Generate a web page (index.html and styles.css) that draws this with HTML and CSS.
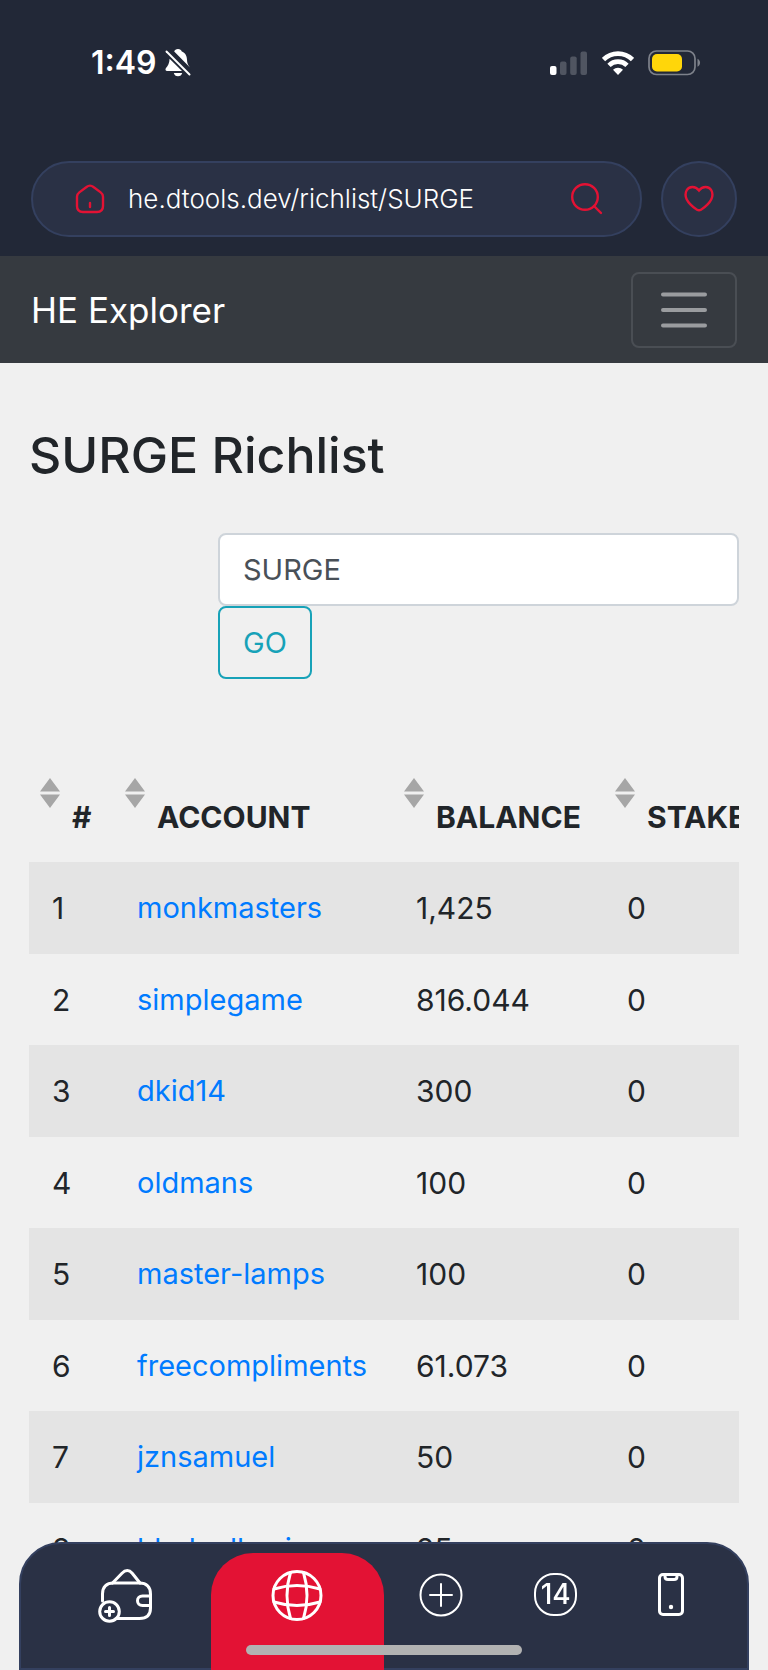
FILE: index.html
```html
<!DOCTYPE html>
<html lang="en">
<head>
    <meta charset="UTF-8">
    <meta name="viewport" content="width=device-width, initial-scale=1">
    <title>SURGE Richlist</title>
    <link rel="stylesheet" href="styles.css">
</head>
<body>
    <header class="topbar">
        <div class="status">
            <span class="time">1:49</span>
            <svg class="bell" width="26" height="28" viewBox="0 0 26 28">
                <path fill="#fff" d="M13 0c-2 0-3.400 1-3.800 2.400L25 18.600c-2-2.400-3-4.600-3-7.600 0-4.600-2-7.400-5.200-8.600C16.300 1 15 0 13 0zM4.600 9.800 17 22H2.200C.4 22 0 20.400 1 19c2-2.400 3.400-4.600 3.600-9.200zM8.800 24h8.400c-.4 2-2 3.300-4.200 3.300S9.200 26 8.800 24z"/>
                <path stroke="#222837" stroke-width="4" d="M3 1l23 23"/>
                <path stroke="#fff" stroke-width="2" stroke-linecap="round" d="M1.500 2.500l23 23"/>
            </svg>
            <div class="signals">
                <svg width="38" height="24" viewBox="0 0 38 24">
                    <rect x="0" y="15" width="6.500" height="9" rx="2" fill="#fff"/>
                    <g fill="#505561">
                        <rect x="10" y="10.500" width="6.500" height="13.500" rx="2"/>
                        <rect x="20.200" y="5.500" width="6.500" height="18.500" rx="2"/>
                        <rect x="30.500" y="0.500" width="6.500" height="23.500" rx="2"/>
                    </g>
                </svg>
                <svg width="32" height="24" viewBox="0 0 32 24">
                    <g fill="none" stroke="#fff" stroke-width="4.600">
                        <path d="M1.500 8.600a20.500 20.500 0 0 1 29 0"/>
                        <path d="M7 14.400a12.700 12.700 0 0 1 18 0"/>
                    </g>
                    <path fill="#fff" d="M16 24l-5-5.200a7.200 7.200 0 0 1 10 0z"/>
                </svg>
                <svg width="54" height="26" viewBox="0 0 54 26">
                    <rect x="1" y="1" width="46" height="23.500" rx="7.500" fill="none" stroke="#7e828b" stroke-width="1.700"/>
                    <rect x="4" y="4" width="30" height="17.500" rx="5" fill="#ffd60a"/>
                    <path fill="#7e828b" d="M49.500 8.800c3.400 1.600 3.400 6.400 0 8z"/>
                </svg>
            </div>
        </div>
        <div class="address-row">
            <div class="address">
                <button class="icon-btn" type="button" aria-label="Home">
                    <svg width="30" height="30" viewBox="0 0 30 30" stroke-width="2.400">
                        <path d="M11.500 3 4.300 8.400C2.600 9.700 2 10.600 2 12.700V22c0 4 2 6 6 6h14c4 0 6-2 6-6v-9.300c0-2.100-.6-3-2.300-4.300L18.500 3c-2.400-1.900-4.600-1.900-7 0z"/>
                        <path d="M15 19v4"/>
                    </svg>
                </button>
                <input class="url" type="text" aria-label="Address" value="he.dtools.dev/richlist/SURGE">
                <button class="icon-btn" type="button" aria-label="Search">
                    <svg width="32" height="32" viewBox="0 0 32 32" stroke-width="2.400">
                        <circle cx="14" cy="14" r="12.800"/>
                        <path d="M23 23l7 7"/>
                    </svg>
                </button>
            </div>
            <button class="favorite" type="button" aria-label="Favorite">
                <svg width="30" height="28" viewBox="0 0 30 28" stroke-width="2.400">
                    <path d="M15 5.500C11.500.8 5 1 2.700 5.300.2 10 2.600 15.400 6.400 19.400c2.400 2.500 4.600 4.200 6.600 5.300 1.400.8 2.600.8 4 0 2-1.100 4.200-2.800 6.600-5.300 3.800-4 6.200-9.400 3.700-14.100C25 1 18.500.8 15 5.500z"/>
                </svg>
            </button>
        </div>
    </header>

    <nav class="navbar">
        <a class="brand" href="#">HE Explorer</a>
        <button class="toggler" type="button" aria-label="Toggle navigation">
            <svg width="46" height="36" viewBox="0 0 46 36">
                <path d="M2 2.500h42M2 18h42M2 33.500h42"/>
            </svg>
        </button>
    </nav>

    <main class="content">
        <h1>SURGE Richlist</h1>
        <form class="token-form">
            <input class="token" type="text" aria-label="Token symbol" value="SURGE">
            <button class="go" type="button">GO</button>
        </form>

        <div class="table-wrap">
            <table>
                <colgroup>
                    <col class="col-rank">
                    <col class="col-account">
                    <col class="col-balance">
                    <col class="col-stake">
                </colgroup>
                <thead>
                    <tr>
                        <th><button class="sort" type="button"><svg width="20" height="30" viewBox="0 0 20 30"><path d="M10 0l10 13.500H0zM0 16.500h20L10 30z"/></svg><span>#</span></button></th>
                        <th><button class="sort" type="button"><svg width="20" height="30" viewBox="0 0 20 30"><path d="M10 0l10 13.500H0zM0 16.500h20L10 30z"/></svg><span>ACCOUNT</span></button></th>
                        <th><button class="sort" type="button"><svg width="20" height="30" viewBox="0 0 20 30"><path d="M10 0l10 13.500H0zM0 16.500h20L10 30z"/></svg><span>BALANCE</span></button></th>
                        <th><button class="sort" type="button"><svg width="20" height="30" viewBox="0 0 20 30"><path d="M10 0l10 13.500H0zM0 16.500h20L10 30z"/></svg><span>STAKE</span></button></th>
                    </tr>
                </thead>
                <tbody>
                    <tr><td>1</td><td><a href="#">monkmasters</a></td><td>1,425</td><td>0</td></tr>
                    <tr><td>2</td><td><a href="#">simplegame</a></td><td>816.044</td><td>0</td></tr>
                    <tr><td>3</td><td><a href="#">dkid14</a></td><td>300</td><td>0</td></tr>
                    <tr><td>4</td><td><a href="#">oldmans</a></td><td>100</td><td>0</td></tr>
                    <tr><td>5</td><td><a href="#">master-lamps</a></td><td>100</td><td>0</td></tr>
                    <tr><td>6</td><td><a href="#">freecompliments</a></td><td>61.073</td><td>0</td></tr>
                    <tr><td>7</td><td><a href="#">jznsamuel</a></td><td>50</td><td>0</td></tr>
                    <tr><td>8</td><td><a href="#">hhokmllsmi</a></td><td>25</td><td>0</td></tr>
                </tbody>
            </table>
        </div>
    </main>

    <nav class="tabs">
        <a class="tab" href="#" aria-label="Wallet">
            <svg width="54" height="54" viewBox="0 0 54 54">
                <path d="M4.500 32V25c0-7 4-11 11-11h26c7 0 11 4 11 11v14c0 7-4 10.500-11 10.500H18"/>
                <path d="M14.500 14 24 4.200c3.400-3.600 7.200-3.600 10.200 0L42 14"/>
                <path d="M52 27h-7.500c-3 0-5 2-5 4.700s2 4.800 5 4.800H52"/>
                <circle cx="11.500" cy="42.500" r="9.800"/>
                <path d="M11.500 38.500v8M7.500 42.500h8"/>
            </svg>
        </a>
        <a class="tab active" href="#" aria-label="Browser">
            <svg width="54" height="54" viewBox="0 0 54 54">
                <circle cx="27" cy="26.500" r="24"/>
                <path d="M20.500 3.500c-4.600 15-4.600 31 0 46M33.500 3.500c4.600 15 4.600 31 0 46"/>
                <path d="M4 20c15-4.600 31-4.600 46 0M4 33c15 4.600 31 4.600 46 0"/>
            </svg>
        </a>
        <a class="tab thin" href="#" aria-label="New tab">
            <svg width="54" height="54" viewBox="0 0 54 54">
                <circle cx="27" cy="26" r="20.500"/>
                <path d="M27 15v22M16 26h22"/>
            </svg>
        </a>
        <a class="tab" href="#"><span class="count">14</span></a>
        <a class="tab" href="#" aria-label="Device">
            <svg width="54" height="54" viewBox="0 0 54 54">
                <rect x="15.500" y="5.500" width="23" height="40" rx="3.500"/>
                <path d="M21 6v1.500c0 2 1 3 3 3h6c2 0 3-1 3-3V6"/>
                <circle class="dot" cx="27" cy="38" r="2.200"/>
            </svg>
        </a>
        <div class="home-indicator"></div>
    </nav>
</body>
</html>
```

FILE: styles.css
```css
* {
    box-sizing: border-box;
}
body {
    margin: 0;
    min-height: 100vh;
    font-family: Inter, "Liberation Sans", sans-serif;
    font-size: 30px;
    line-height: 44px;
    color: #212529;
    background-color: #f0f0f0;
}
svg {
    display: block;
    flex-shrink: 0;
}
button, input {
    font: inherit;
    margin: 0;
}
button {
    cursor: pointer;
}
a {
    color: #007bff;
    text-decoration: none;
}

/* browser header */
.topbar {
    background-color: #222837;
    padding: 49px 31px 19px;
}
.status {
    display: flex;
    align-items: center;
    height: 28px;
    padding: 0 35px 0 60px;
    color: #fff;
}
.time {
    font-size: 32px;
    font-weight: 600;
    margin-right: 8px;
}
.signals {
    display: flex;
    align-items: center;
    gap: 14px;
    margin-left: auto;
}
.address-row {
    display: flex;
    gap: 19px;
    margin-top: 84px;
}
.address {
    flex: 1;
    min-width: 0;
    display: flex;
    align-items: center;
    height: 76px;
    padding: 0 37px 0 42px;
    border: 2px solid #34405f;
    border-radius: 38px;
    background-color: #2a3145;
}
.icon-btn {
    padding: 0;
    border: none;
    background: none;
}
.icon-btn svg, .favorite svg {
    fill: none;
    stroke: #e31234;
    stroke-linecap: round;
}
.url {
    flex: 1;
    min-width: 0;
    padding: 0 23px;
    border: none;
    outline: none;
    background: none;
    color: #fff;
    font-size: 26px;
    font-weight: 300;
}
.favorite {
    display: flex;
    align-items: center;
    justify-content: center;
    width: 76px;
    height: 76px;
    padding: 0;
    border: 2px solid #34405f;
    border-radius: 50%;
    background-color: #2a3145;
}

/* site navbar */
.navbar {
    display: flex;
    align-items: center;
    justify-content: space-between;
    padding: 16px 31px 15px;
    background-color: #363a40;
}
.brand {
    color: #fff;
    font-size: 35px;
}
.toggler {
    padding: 18px 28px;
    border: 2px solid #4a4e54;
    border-radius: 8px;
    background: none;
}
.toggler svg {
    stroke: #9a9c9f;
    stroke-width: 4;
    stroke-linecap: round;
}

/* page */
.content {
    padding: 62px 29px 32px;
}
h1 {
    margin: 0 0 48px;
    font-size: 50px;
    font-weight: 500;
    line-height: 60px;
}
.token-form {
    display: flex;
    flex-direction: column;
    align-items: flex-start;
    margin: 0 0 92px 189px;
}
.token, .go {
    height: 73px;
    padding: 0 23px;
    border-radius: 8px;
    font-size: 29px;
}
.token {
    width: 100%;
    border: 2px solid #ced4da;
    background-color: #fff;
    color: #495057;
}
.go {
    border: 2px solid #17a2b8;
    background: none;
    color: #17a2b8;
}
.table-wrap {
    overflow: hidden;
}
table {
    width: 780px;
    table-layout: fixed;
    border-collapse: collapse;
}
.col-rank {
    width: 85px;
}
.col-account {
    width: 279px;
}
.col-balance {
    width: 211px;
}
th {
    padding: 7px 0 23px 11px;
    text-align: left;
}
td {
    padding: 24px 0 24px 23px;
}
td a {
    display: block;
    font-size: 29px;
}
tbody tr:nth-child(odd) {
    background-color: #e4e4e4;
}
tbody tr:nth-child(even) td {
    padding-bottom: 23px;
}
.sort {
    display: flex;
    gap: 12px;
    padding: 0;
    border: none;
    background: none;
    color: inherit;
    font-weight: 700;
}
.sort svg {
    fill: #a6a6a6;
}
.sort span {
    padding-top: 17px;
}

/* bottom tabs */
.tabs {
    position: fixed;
    left: 19px;
    right: 19px;
    bottom: 0;
    display: grid;
    grid-template-columns: 3fr 3fr 2fr 2fr 2fr;
    height: 128px;
    padding: 9px 19px 0 18px;
    border: 2px solid #34405f;
    border-radius: 42px 42px 0 0;
    background-color: #2a3145;
}
.tab {
    display: flex;
    justify-content: center;
    align-items: flex-start;
    padding-top: 16px;
    color: #fff;
}
.tab svg {
    fill: none;
    stroke: #fff;
    stroke-width: 3;
    stroke-linecap: round;
}
.tab.thin svg {
    stroke-width: 2;
}
.tab .dot {
    fill: #fff;
    stroke: none;
}
.tab.active {
    margin-bottom: -2px;
    border-radius: 42px 42px 0 0;
    background-color: #e31234;
}
.count {
    width: 43px;
    height: 43px;
    margin-top: 4px;
    border: 2px solid #fff;
    border-radius: 20px;
    font-size: 28px;
    font-weight: 500;
    line-height: 39px;
    text-align: center;
}
.home-indicator {
    position: absolute;
    left: 50%;
    bottom: 13px;
    width: 276px;
    height: 10px;
    margin-left: -138px;
    border-radius: 5px;
    background-color: #b2b2b2;
}
```
